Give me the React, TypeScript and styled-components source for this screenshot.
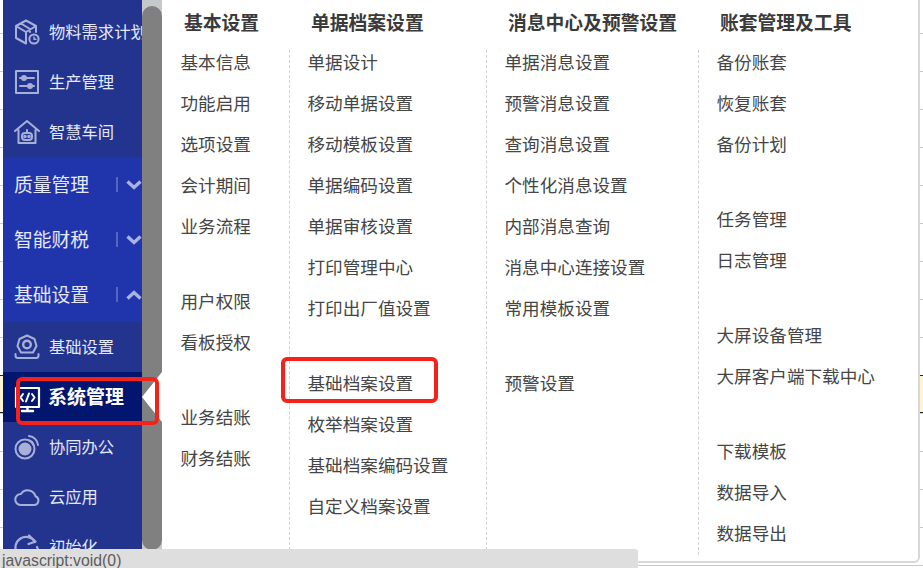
import React from "react";
import styled, { createGlobalStyle } from "styled-components";

const GlobalStyle = createGlobalStyle`
  html, body {
    margin: 0;
    padding: 0;
    background: #fff;
    overflow: hidden;
  }
  * {
    box-sizing: border-box;
  }
`;

const stroke = {
  fill: "none",
  stroke: "currentColor",
  strokeWidth: 2,
  strokeLinecap: "round" as const,
  strokeLinejoin: "round" as const,
};

const CubeIcon = () => (
  <svg width="26" height="26" viewBox="0 0 26 26" {...stroke}>
    <path d="M12 1.5 L22 7 V13 M12 24.5 L2 19 V7 L12 1.5 M2 7 L12 13 L22 7 M12 13 V24.5 M7 4.5 L16 10 V13" />
    <circle cx="20" cy="20" r="4.6" />
    <path d="M20 18 V20.3 H22" strokeWidth="1.4" />
  </svg>
);

const SlidersIcon = () => (
  <svg width="26" height="26" viewBox="0 0 26 26" {...stroke}>
    <rect x="2" y="2" width="22" height="22" />
    <path d="M6 9 H20 M6 17 H20" />
    <circle cx="10" cy="9" r="2" fill="currentColor" />
    <circle cx="16" cy="17" r="2" fill="currentColor" />
  </svg>
);

const RobotHouseIcon = () => (
  <svg width="26" height="26" viewBox="0 0 26 26" {...stroke}>
    <path d="M1 12 L13 2 L25 12 M4.5 11 V24 H21.5 V11" />
    <rect x="8" y="14" width="10" height="7" rx="3" />
    <path d="M13 11 V14" />
    <circle cx="11" cy="17.5" r="0.8" fill="currentColor" />
    <circle cx="15" cy="17.5" r="0.8" fill="currentColor" />
  </svg>
);

const GearIcon = () => (
  <svg width="26" height="26" viewBox="0 0 26 26" {...stroke}>
    <path d="M13 1.5 L20.5 5 L22.5 12 L19 18.5 H7 L3.5 12 L5.5 5 Z" />
    <circle cx="13" cy="10.5" r="3.8" strokeWidth="2.4" />
    <path d="M1.5 20 V21.5 Q1.5 24 4 24 H22 Q24.5 24 24.5 21.5 V20" />
  </svg>
);

const MonitorIcon = () => (
  <svg width="26" height="26" viewBox="0 0 26 26" overflow="visible" {...stroke}>
    <path d="M2 4 H25 V23 H2 Z" strokeWidth="2.2" />
    <path d="M13.5 23 V26.5 M8 27 H19" strokeWidth="2.4" />
    <path d="M9 10 L6.5 13.5 L9 17 M18 10 L20.5 13.5 L18 17 M15 9.5 L12 17.5" strokeWidth="2" />
  </svg>
);

const SignalIcon = () => (
  <svg width="26" height="26" viewBox="0 0 26 26" {...stroke}>
    <circle cx="11" cy="15" r="9.5" />
    <circle cx="11" cy="15" r="5.5" fill="currentColor" />
    <path d="M15 2 A10 10 0 0 1 24 11 M15 6.5 A6 6 0 0 1 19.5 11" />
  </svg>
);

const CloudIcon = () => (
  <svg width="26" height="26" viewBox="0 0 26 26" {...stroke}>
    <path d="M6.5 21 H20 A4.5 4.5 0 0 0 21.5 12.3 A8 8 0 0 0 7 10 A5.5 5.5 0 0 0 6.5 21 Z" />
  </svg>
);

const RefreshIcon = () => (
  <svg width="26" height="26" viewBox="0 0 26 26" {...stroke}>
    <path d="M3 19 A10.5 10.5 0 0 1 21 8 M15 1.5 L21.5 7.5 L14.5 10" strokeWidth="2.2" />
    <path d="M23 13 A10.5 10.5 0 0 1 5 24" strokeWidth="2.2" />
  </svg>
);

const columns = [
  {
    title: "基本设置",
    width: 127,
    groups: [
      ["基本信息", "功能启用", "选项设置", "会计期间", "业务流程"],
      ["用户权限", "看板授权"],
      ["业务结账", "财务结账"],
    ],
  },
  {
    title: "单据档案设置",
    width: 197,
    groups: [
      ["单据设计", "移动单据设置", "移动模板设置", "单据编码设置", "单据审核设置", "打印管理中心", "打印出厂值设置"],
      ["基础档案设置", "枚举档案设置", "基础档案编码设置", "自定义档案设置"],
    ],
  },
  {
    title: "消息中心及预警设置",
    width: 212,
    groups: [
      ["单据消息设置", "预警消息设置", "查询消息设置", "个性化消息设置", "内部消息查询", "消息中心连接设置", "常用模板设置"],
      ["预警设置"],
    ],
  },
  {
    title: "账套管理及工具",
    width: 220,
    groups: [
      ["备份账套", "恢复账套", "备份计划"],
      ["任务管理", "日志管理"],
      ["大屏设备管理", "大屏客户端下载中心"],
      ["下载模板", "数据导入", "数据导出"],
    ],
  },
];

const Chevron = ({ up }: { up?: boolean }) => (
  <ChevronBox>
    <svg width="16" height="10" viewBox="0 0 16 10" fill="none" stroke="currentColor" strokeWidth="3.4">
      <path d={up ? "M1.5 8.5 L8 2.5 L14.5 8.5" : "M1.5 1.5 L8 7.5 L14.5 1.5"} />
    </svg>
  </ChevronBox>
);

const App = () => {
  return (
    <Page>
      <GlobalStyle />
      <NoticeBehind />
      <Sidebar>
        <SubItem><CubeIcon /><span>物料需求计划</span></SubItem>
        <SubItem><SlidersIcon /><span>生产管理</span></SubItem>
        <SubItem><RobotHouseIcon /><span>智慧车间</span></SubItem>
        <Section><SectionLabel>质量管理</SectionLabel><SectionBar /><Chevron /></Section>
        <Section><SectionLabel>智能财税</SectionLabel><SectionBar /><Chevron /></Section>
        <Section><SectionLabel>基础设置</SectionLabel><SectionBar /><Chevron up /></Section>
        <SubItem><GearIcon /><span>基础设置</span></SubItem>
        <SubItem $active><MonitorIcon /><span>系统管理</span></SubItem>
        <SubItem><SignalIcon /><span>协同办公</span></SubItem>
        <SubItem><CloudIcon /><span>云应用</span></SubItem>
        <SubItem><RefreshIcon /><span>初始化</span></SubItem>
      </Sidebar>
      <ScrollTrack>
        <ScrollThumb />
        <ActiveArrow />
      </ScrollTrack>
      <Panel>
        {columns.map((col, i) => (
          <Column key={col.title} $width={col.width}>
            <Heading>{col.title}</Heading>
            <List $first={i === 0}>
              <Groups>
                {col.groups.map((group, g) => (
                  <Group key={g}>
                    {group.map((item) => (
                      <Item key={item}>{item}</Item>
                    ))}
                  </Group>
                ))}
              </Groups>
            </List>
          </Column>
        ))}
      </Panel>
      <MarkSidebar />
      <MarkPanel />
      <StatusBar>javascript:void(0)</StatusBar>
    </Page>
  );
};

export default App;

const cjk = `"Noto Sans CJK SC", "Noto Sans", sans-serif`;

const Page = styled.div`
  position: relative;
  display: flex;
  width: 923px;
  height: 568px;
  padding-left: 3px;
  overflow: hidden;
  font-family: ${cjk};
  background: repeating-linear-gradient(
    to bottom,
    transparent 0,
    transparent 33px,
    #c9c9c9 33px,
    #c9c9c9 34px,
    transparent 34px,
    transparent 38px
  );
`;

const NoticeBehind = styled.div`
  position: absolute;
  left: 0;
  right: 0;
  top: 375px;
  height: 38px;
  background: #fff4cf;
  border-top: 1px solid #222;
  border-bottom: 1px solid #222;
`;

const Sidebar = styled.nav`
  position: relative;
  flex: none;
  width: 139px;
  height: 568px;
  padding-top: 7px;
  overflow: hidden;
  background: #23348e;
`;

const SubItem = styled.div<{ $active?: boolean }>`
  display: flex;
  align-items: center;
  gap: ${(p) => (p.$active ? "8px" : "9px")};
  height: 50px;
  padding-left: 11px;
  white-space: nowrap;
  color: ${(p) => (p.$active ? "#ffffff" : "#e4e8f8")};
  background: ${(p) => (p.$active ? "#03166f" : "transparent")};
  font-weight: ${(p) => (p.$active ? 700 : 400)};
  font-size: ${(p) => (p.$active ? "19px" : "16.3px")};
  & svg {
    flex: none;
    color: ${(p) => (p.$active ? "#ffffff" : "#a9b0d8")};
  }
  & span {
    position: relative;
    top: ${(p) => (p.$active ? "-2px" : "-1px")};
    line-height: 1;
  }
`;

const Section = styled.div`
  display: flex;
  align-items: center;
  height: 55px;
  padding-left: 11px;
  white-space: nowrap;
  background: #2035ab;
`;

const SectionLabel = styled.span`
  width: 103px;
  font-size: 18.8px;
  line-height: 1;
  color: #e6e9fb;
`;

const SectionBar = styled.i`
  flex: none;
  width: 2px;
  height: 15px;
  background: #5766bd;
`;

const ChevronBox = styled.span`
  display: flex;
  flex: none;
  margin-left: 8px;
  color: #a9b2e4;
`;

const ScrollTrack = styled.div`
  position: relative;
  flex: none;
  width: 20px;
  height: 568px;
  padding: 6px 0 18px;
  background: #c6c8cc;
`;

const ScrollThumb = styled.div`
  height: 100%;
  border-radius: 10px;
  background: #808080;
`;

const ActiveArrow = styled.div`
  position: absolute;
  left: 0;
  top: 372px;
  width: 0;
  height: 0;
  border-top: 25px solid transparent;
  border-bottom: 25px solid transparent;
  border-right: 20px solid #ffffff;
`;

const Panel = styled.main`
  position: relative;
  display: flex;
  flex: none;
  width: 758px;
  height: 563px;
  background: #ffffff;
  border-right: 2px solid #d8d8d8;
  border-bottom: 2px solid #d8d8d8;
  border-bottom-right-radius: 6px;
`;

const Column = styled.section<{ $width: number }>`
  display: flex;
  flex-direction: column;
  flex: none;
  width: ${(p) => p.$width}px;
`;

const Heading = styled.h3`
  flex: none;
  height: 50px;
  margin: 0;
  padding: 9px 0 0 22px;
  font-size: 18.8px;
  line-height: 26px;
  font-weight: 700;
  color: #3a3a3a;
  white-space: nowrap;
`;

const List = styled.div<{ $first?: boolean }>`
  flex: 1;
  min-height: 0;
  margin-bottom: 6px;
  border-left: 1px dashed ${(p) => (p.$first ? "transparent" : "#d2d2d2")};
`;

const Groups = styled.div`
  display: flex;
  flex-direction: column;
  gap: 34px;
  margin-top: -9.5px;
`;

const Group = styled.ul`
  margin: 0;
  padding: 0;
  list-style: none;
`;

const Item = styled.li`
  height: 41px;
  padding-left: 17.5px;
  font-size: 17.6px;
  line-height: 41px;
  color: #454545;
  white-space: nowrap;
`;

const MarkSidebar = styled.div`
  position: absolute;
  left: 16px;
  top: 377px;
  width: 143px;
  height: 48px;
  border: 4px solid #f5211b;
  border-radius: 6px;
`;

const MarkPanel = styled.div`
  position: absolute;
  left: 281px;
  top: 357px;
  width: 157px;
  height: 46px;
  border: 4px solid #f5211b;
  border-radius: 6px;
`;

const StatusBar = styled.div`
  position: absolute;
  left: 0;
  bottom: 0;
  width: 638px;
  height: 19px;
  padding-left: 2px;
  background: #dedede;
  border-top-right-radius: 3px;
  font-family: "Liberation Sans", Arial, sans-serif;
  font-size: 15.8px;
  line-height: 24px;
  color: #5c5c5c;
  white-space: nowrap;
  overflow: hidden;
`;
